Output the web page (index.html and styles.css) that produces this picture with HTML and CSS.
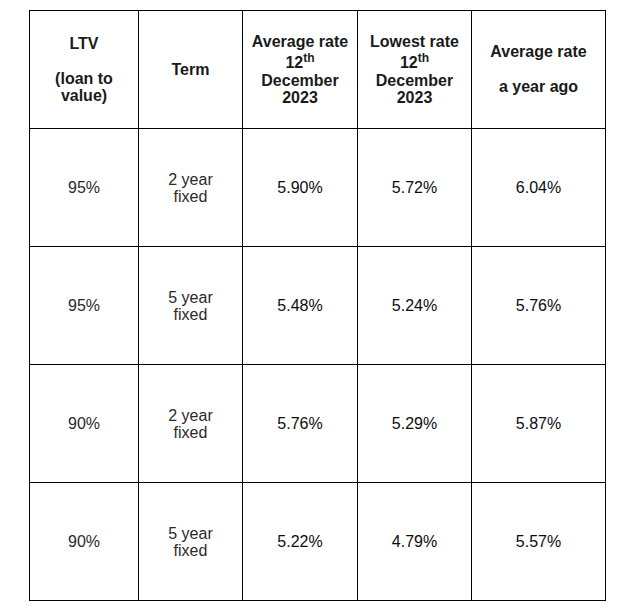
FILE: index.html
```html
<!DOCTYPE html>
<html>
<head>
<meta charset="utf-8">
<link rel="stylesheet" href="styles.css">
</head>
<body>
<table class="rates">
  <colgroup>
    <col class="c1"><col class="c2"><col class="c3"><col class="c4"><col class="c5">
  </colgroup>
  <thead>
    <tr>
      <th>LTV<br><br>(loan to value)</th>
      <th>Term</th>
      <th>Average rate<br><span class="ord">12<sup>th</sup></span><br>December<br>2023</th>
      <th>Lowest rate<br><span class="ord">12<sup>th</sup></span><br>December<br>2023</th>
      <th>Average rate<br><br>a year ago</th>
    </tr>
  </thead>
  <tbody>
    <tr>
      <td class="soft">95%</td>
      <td class="soft">2 year<br>fixed</td>
      <td>5.90%</td>
      <td>5.72%</td>
      <td>6.04%</td>
    </tr>
    <tr>
      <td class="soft">95%</td>
      <td class="soft">5 year<br>fixed</td>
      <td>5.48%</td>
      <td>5.24%</td>
      <td>5.76%</td>
    </tr>
    <tr>
      <td class="soft">90%</td>
      <td class="soft">2 year<br>fixed</td>
      <td>5.76%</td>
      <td>5.29%</td>
      <td>5.87%</td>
    </tr>
    <tr>
      <td class="soft">90%</td>
      <td class="soft">5 year<br>fixed</td>
      <td>5.22%</td>
      <td>4.79%</td>
      <td>5.57%</td>
    </tr>
  </tbody>
</table>
</body>
</html>
```
FILE: styles.css
```css
html, body {
  margin: 0;
  padding: 0;
  background: #ffffff;
}

body {
  padding: 10px 0 0 29px;
  font-family: "Liberation Sans", Arial, Helvetica, sans-serif;
  font-size: 16px;
  color: #111111;
}

.rates {
  border-collapse: collapse;
  table-layout: fixed;
  width: 576px;
}

.c1 { width: 109px; }
.c2 { width: 104px; }
.c3 { width: 115px; }
.c4 { width: 114px; }
.c5 { width: 134px; }

.rates th,
.rates td {
  border: 1px solid #000000;
  text-align: center;
  vertical-align: middle;
  padding: 0 4px;
  line-height: 17px;
  height: 118px;
  box-sizing: border-box;
}

.rates th {
  font-weight: bold;
  color: #1a1a1a;
  line-height: 17.5px;
}

.rates td {
  color: #0d0d0d;
}

.rates td.soft {
  color: #2a2a2a;
}

.rates .ord {
  display: inline-block;
  padding-top: 4px;
  line-height: 17px;
}

.rates sup {
  font-size: 12px;
  line-height: 0;
  vertical-align: 6px;
}
```
